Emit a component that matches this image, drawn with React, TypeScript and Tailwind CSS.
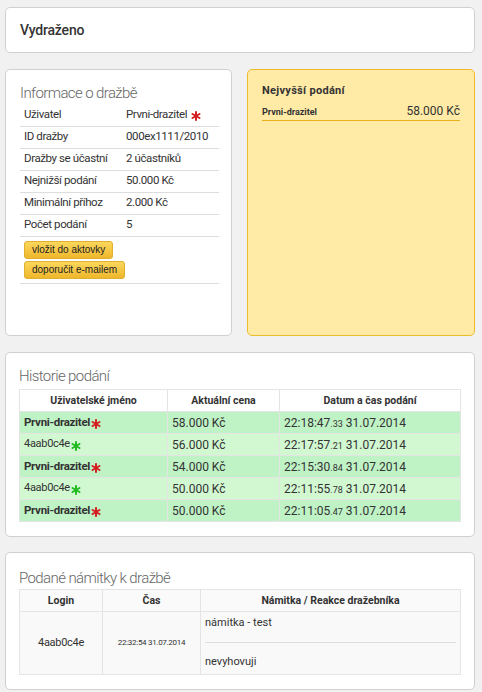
const font = { fontFamily: "Roboto, 'Liberation Sans', sans-serif" };

type Bid = { user: string; own: boolean; price: string; time: string; ms: string; date: string };

const bids: Bid[] = [
  { user: "Prvni-drazitel", own: true, price: "58.000 Kč", time: "22:18:47", ms: ".33", date: "31.07.2014" },
  { user: "4aab0c4e", own: false, price: "56.000 Kč", time: "22:17:57", ms: ".21", date: "31.07.2014" },
  { user: "Prvni-drazitel", own: true, price: "54.000 Kč", time: "22:15:30", ms: ".84", date: "31.07.2014" },
  { user: "4aab0c4e", own: false, price: "50.000 Kč", time: "22:11:55", ms: ".78", date: "31.07.2014" },
  { user: "Prvni-drazitel", own: true, price: "50.000 Kč", time: "22:11:05", ms: ".47", date: "31.07.2014" },
];

const info = [
  ["ID dražby", "000ex1111/2010"],
  ["Dražby se účastní", "2 účastníků"],
  ["Nejnižší podání", "50.000 Kč"],
  ["Minimální příhoz", "2.000 Kč"],
  ["Počet podání", "5"],
];

function Star({ color }: { color: string }) {
  return (
    <svg width="10" height="10" viewBox="0 0 10 10" className="inline-block ml-[1px] -mb-[3px]">
      <g stroke={color} strokeWidth="2" strokeLinecap="round">
        <line x1="5" y1="1" x2="5" y2="9" />
        <line x1="1.5" y1="3" x2="8.5" y2="7" />
        <line x1="1.5" y1="7" x2="8.5" y2="3" />
      </g>
    </svg>
  );
}

function Panel({ children, className = "" }: { children: React.ReactNode; className?: string }) {
  return <div className={`bg-white border border-[#d0d0d0] rounded-[5px] ${className}`}>{children}</div>;
}

function Btn({ children }: { children: React.ReactNode }) {
  return (
    <button
      className="block h-[18px] px-[7px] text-[10px] leading-[16px] text-[#222] border border-[#e0b030] rounded-[3px] bg-gradient-to-b from-[#fbd75b] to-[#efb72a]"
      style={{ fontFamily: "'Liberation Sans', Arial, sans-serif" }}
    >
      {children}
    </button>
  );
}

export default function App() {
  return (
    <div className="min-h-[692px] bg-[#f1f1f1] pt-[7px] pl-[5px] pr-[7px] pb-[4px] text-[#333]" style={font}>
      <Panel className="h-[46px] flex items-center px-[14px]">
        <h1 className="text-[14px] font-medium text-[#333] tracking-[-0.2px]">Vydraženo</h1>
      </Panel>

      <div className="flex gap-[15px] mt-[16px]">
        <Panel className="w-[227px] h-[267px] px-[14px] pt-[13px]">
          <h2 className="text-[15px] font-light text-[#666] leading-[20px] tracking-[-0.6px]">Informace o dražbě</h2>
          <table className="w-[199px] text-[11.5px] tracking-[-0.4px] text-[#333] border-collapse">
            <tbody>
              <tr className="h-[23px] border-b border-[#ddd]">
                <td className="pl-[4px] w-[106px]">Uživatel</td>
                <td>
                  Prvni-drazitel <Star color="#d42020" />
                </td>
              </tr>
              {info.map(([k, v]) => (
                <tr key={k} className="h-[22px] border-b border-[#ddd]">
                  <td className="pl-[4px]">{k}</td>
                  <td>{v}</td>
                </tr>
              ))}
              <tr className="border-b border-[#ddd]">
                <td colSpan={2} className="pl-[4px] pt-[4px] pb-[4px] tracking-normal">
                  <div className="flex flex-col items-start gap-[2px]">
                    <Btn>vložit do aktovky</Btn>
                    <Btn>doporučit e-mailem</Btn>
                  </div>
                </td>
              </tr>
            </tbody>
          </table>
        </Panel>

        <div className="w-[228px] h-[267px] bg-[#ffeaa6] border border-[#ecbc2c] rounded-[5px] px-[14px] pt-[14px]">
          <h3 className="text-[11px] font-bold text-[#333] leading-[14px] tracking-[0.3px]">Nejvyšší podání</h3>
          <div className="flex items-end justify-between border-b border-[#e8b01c] mt-[5px] pb-[1px]">
            <span className="text-[9px] font-bold leading-[14px]">Prvni-drazitel</span>
            <span className="text-[12px] leading-[16px] text-[#333]">58.000 Kč</span>
          </div>
        </div>
      </div>

      <Panel className="mt-[16px] h-[185px] px-[13px] pt-[13px]">
        <h2 className="text-[15px] font-light text-[#666] leading-[21px] tracking-[-0.6px]">Historie podání</h2>
        <table className="w-[442px] text-[12px] border-collapse mt-[2px]">
          <thead>
            <tr className="h-[22px] bg-white text-[10.5px]">
              <th className="border border-[#e4e4e4] w-[148px] font-bold text-[#333]">Uživatelské jméno</th>
              <th className="border border-[#e4e4e4] w-[112px] font-bold text-[#333]">Aktuální cena</th>
              <th className="border border-[#e4e4e4] font-bold text-[#333]">Datum a čas podání</th>
            </tr>
          </thead>
          <tbody>
            {bids.map((b, i) => (
              <tr key={i} className={`h-[22px] ${b.own ? "bg-[#bff2c5]" : "bg-[#d2f8d2]"}`}>
                <td className={`border border-[#e4e4e4] pl-[4px] ${b.own ? "font-bold text-[11.5px] tracking-[-0.3px]" : "text-[11px] tracking-[-0.3px]"}`}>
                  {b.user}
                  <Star color={b.own ? "#d42020" : "#22bb22"} />
                </td>
                <td className="border border-[#e4e4e4] pl-[4px]">{b.price}</td>
                <td className="border border-[#e4e4e4] pl-[4px]">
                  {b.time}
                  <span className="text-[9px]">{b.ms}</span> {b.date}
                </td>
              </tr>
            ))}
          </tbody>
        </table>
      </Panel>

      <Panel className="mt-[15px] h-[138px] px-[13px] pt-[15px]">
        <h2 className="text-[15px] font-light text-[#666] leading-[21px] tracking-[-0.6px]">Podané námitky k dražbě</h2>
        <table className="w-[442px] text-[11px] border-collapse">
          <thead>
            <tr className="h-[22px] bg-[#fafafa] text-[10.5px]">
              <th className="border border-[#e4e4e4] w-[83px] font-bold text-[#333]">Login</th>
              <th className="border border-[#e4e4e4] w-[98px] font-bold text-[#333]">Čas</th>
              <th className="border border-[#e4e4e4] font-bold text-[#333]">Námitka / Reakce dražebníka</th>
            </tr>
          </thead>
          <tbody>
            <tr className="bg-[#f9f9f9]">
              <td className="border border-[#e4e4e4] text-center tracking-[-0.3px]">4aab0c4e</td>
              <td className="border border-[#e4e4e4] text-center text-[8px] tracking-[-0.3px]">22:32:54 31.07.2014</td>
              <td className="border border-[#e4e4e4] px-[4px]">
                <div className="h-[31px] pt-[3px] border-b border-[#ddd]">námitka - test</div>
                <div className="h-[31px] pt-[11px]">nevyhovuji</div>
              </td>
            </tr>
          </tbody>
        </table>
      </Panel>
    </div>
  );
}
